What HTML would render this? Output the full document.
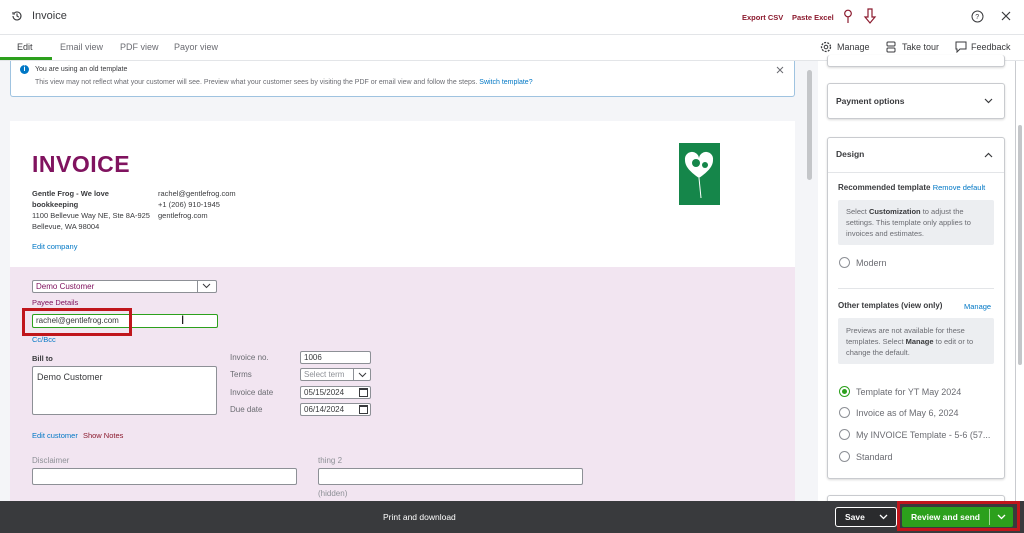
<!DOCTYPE html>
<html><head><style>
*{box-sizing:border-box;margin:0;padding:0}
body{width:1024px;height:533px;overflow:hidden;font-family:"Liberation Sans",sans-serif;background:#fff;position:relative;color:#393a3d;font-size:9px}
.a{position:absolute}
.inp{position:absolute;background:#fff;border:1px solid #8d9096;border-radius:2px;font-size:8px;padding:1px 3px;color:#393a3d}
.lbl{position:absolute;font-size:8px;color:#6b6c72}
.card{position:absolute;left:827px;width:178px;border:1px solid #c9cbcf;border-radius:3px;background:#fff;box-shadow:0 1px 2px rgba(0,0,0,.15)}
.radio{position:absolute;width:11px;height:11px;border:1px solid #8d9096;border-radius:50%;background:#fff}
.rt{position:absolute;font-size:9px;color:#6b6c72}
</style></head><body>
<div class="a" style="left:0;top:0;width:1024px;height:35px;border-bottom:1px solid #e3e5e8"></div>
<svg class="a" style="left:11px;top:10px" width="12" height="12" viewBox="0 0 12 12"><path d="M2 6a4 4 0 1 0 1.2-2.9M2 2v2h2M6 3.5V6l1.8 1.2" fill="none" stroke="#393a3d" stroke-width="1.1"/></svg>
<div class="a" style="left:32px;top:10px;font-size:11px">Invoice</div>
<div class="a" style="left:742px;top:13px;font-size:7.5px;color:#8b1a2e;font-weight:bold">Export CSV</div>
<div class="a" style="left:792px;top:13px;font-size:7.5px;color:#8b1a2e;font-weight:bold">Paste Excel</div>
<svg class="a" style="left:842px;top:9px" width="12" height="15" viewBox="0 0 12 15"><circle cx="6" cy="4.5" r="3.3" fill="none" stroke="#8b1a2e" stroke-width="1.2"/><path d="M6 8v6" stroke="#8b1a2e" stroke-width="1.2"/></svg>
<svg class="a" style="left:863px;top:8px" width="14" height="16" viewBox="0 0 14 16"><path d="M5 1h4v8h3l-5 6-5-6h3z" fill="none" stroke="#8b1a2e" stroke-width="1.2"/></svg>
<svg class="a" style="left:971px;top:10px" width="13" height="13" viewBox="0 0 13 13"><circle cx="6.5" cy="6.5" r="5.5" fill="none" stroke="#393a3d"/><text x="4.3" y="9" font-size="7" fill="#393a3d" font-family="Liberation Sans">?</text></svg>
<svg class="a" style="left:1001px;top:11px" width="10" height="10" viewBox="0 0 10 10"><path d="M1 1l8 8M9 1l-8 8" stroke="#393a3d" stroke-width="1.2"/></svg>
<div class="a" style="left:0;top:36px;width:1024px;height:25px;border-bottom:1px solid #e3e5e8"></div>
<div class="a" style="left:17px;top:42px;font-size:9px">Edit</div>
<div class="a" style="left:0;top:57px;width:52px;height:3px;background:#2ca01c"></div>
<div class="a" style="left:60px;top:42px;font-size:9px;color:#6b6c72">Email view</div>
<div class="a" style="left:120px;top:42px;font-size:9px;color:#6b6c72">PDF view</div>
<div class="a" style="left:174px;top:42px;font-size:9px;color:#6b6c72">Payor view</div>
<svg class="a" style="left:820px;top:41px" width="12" height="12" viewBox="0 0 12 12"><circle cx="6" cy="6" r="4.5" fill="none" stroke="#393a3d" stroke-width="1.3" stroke-dasharray="2 1.2"/><circle cx="6" cy="6" r="1.8" fill="none" stroke="#393a3d"/></svg>
<div class="a" style="left:837px;top:42px;font-size:9px">Manage</div>
<svg class="a" style="left:886px;top:41px" width="10" height="12" viewBox="0 0 10 12"><rect x="1" y="1" width="8" height="4" rx="1" fill="none" stroke="#393a3d"/><rect x="1" y="7" width="8" height="4" rx="1" fill="none" stroke="#393a3d"/></svg>
<div class="a" style="left:902px;top:42px;font-size:9px">Take tour</div>
<svg class="a" style="left:955px;top:41px" width="12" height="12" viewBox="0 0 12 12"><path d="M1 1h10v7H5l-3 3V8H1z" fill="none" stroke="#393a3d"/></svg>
<div class="a" style="left:971px;top:42px;font-size:9px">Feedback</div>
<div class="a" style="left:0;top:61px;width:818px;height:440px;background:#f4f5f8"></div>
<div class="a" style="left:807px;top:70px;width:5px;height:110px;background:#c4c6c9;border-radius:3px"></div>
<div class="a" style="left:10px;top:61px;width:785px;height:36px;background:#fff;border:1px solid #9fc3e0;border-top:none;border-radius:0 0 3px 3px"></div>
<div class="a" style="left:20px;top:65px;width:9px;height:9px;border-radius:50%;background:#0077c5;color:#fff;font-size:7px;text-align:center;line-height:9px;font-weight:bold">i</div>
<div class="a" style="left:35px;top:66px;font-size:7px;color:#393a3d">You are using an old template</div>
<div class="a" style="left:35px;top:79px;font-size:7px;color:#6b6c72">This view may not reflect what your customer will see. Preview what your customer sees by visiting the PDF or email view and follow the steps. <span style="color:#0077c5">Switch template?</span></div>
<svg class="a" style="left:776px;top:66px" width="8" height="8" viewBox="0 0 8 8"><path d="M1 1l6 6M7 1l-6 6" stroke="#6b6c72"/></svg>
<div class="a" style="left:10px;top:121px;width:785px;height:146px;background:#fff"></div>
<div class="a" style="left:10px;top:267px;width:785px;height:234px;background:#f2e5f1"></div>
<div class="a" style="left:32px;top:151px;font-size:23px;color:#80135f;font-weight:bold;letter-spacing:.5px">INVOICE</div>
<div class="a" style="left:32px;top:188px;font-size:7.5px;line-height:11px;color:#393a3d"><b>Gentle Frog - We love<br>bookkeeping</b><br>1100 Bellevue Way NE, Ste 8A-925<br>Bellevue, WA 98004</div>
<div class="a" style="left:158px;top:188px;font-size:7.5px;line-height:11px">rachel@gentlefrog.com<br>+1 (206) 910-1945<br>gentlefrog.com</div>
<div class="a" style="left:32px;top:242px;font-size:7.5px;color:#0077c5">Edit company</div>
<div class="a" style="left:679px;top:143px;width:41px;height:62px;background:#15864a"></div>
<svg class="a" style="left:679px;top:143px" width="41" height="62" viewBox="0 0 41 62"><path d="M20 35c-10-7-14-12-14-18a7 7 0 0 1 14-2a7 7 0 0 1 14 2c0 6-4 11-14 18z" fill="#fff"/><path d="M20 35l2 20" stroke="#fff" stroke-width="1"/><circle cx="17" cy="20" r="4" fill="#15864a"/><circle cx="26" cy="22" r="3" fill="#15864a"/></svg>
<div class="inp" style="left:32px;top:280px;width:185px;height:13px;color:#80135f">Demo Customer</div>
<div class="a" style="left:197px;top:280px;width:1px;height:13px;background:#8d9096"></div>
<svg class="a" style="left:202px;top:283px" width="9" height="6" viewBox="0 0 9 6"><path d="M1 1l3.5 3.5L8 1" fill="none" stroke="#393a3d"/></svg>
<div class="a" style="left:32px;top:298px;font-size:7.5px;color:#80135f">Payee Details</div>
<div class="inp" style="left:32px;top:314px;width:186px;height:14px;border-color:#2ca01c">rachel@gentlefrog.com</div>
<div class="a" style="left:22px;top:308px;width:110px;height:28px;border:3px solid #c0161c"></div>
<div class="a" style="left:181px;top:313px;font-size:12px;color:#000">I</div>
<div class="a" style="left:32px;top:335px;font-size:7.5px;color:#0077c5">Cc/Bcc</div>
<div class="a" style="left:32px;top:354px;font-size:7.5px;font-weight:bold">Bill to</div>
<div class="inp" style="left:32px;top:366px;width:185px;height:49px;font-size:9px;padding:5px 4px">Demo Customer</div>
<div class="lbl" style="left:230px;top:353px">Invoice no.</div>
<div class="lbl" style="left:230px;top:370px">Terms</div>
<div class="lbl" style="left:230px;top:388px">Invoice date</div>
<div class="lbl" style="left:230px;top:405px">Due date</div>
<div class="inp" style="left:300px;top:351px;width:71px;height:13px">1006</div>
<div class="inp" style="left:300px;top:368px;width:71px;height:13px;color:#8d9096">Select term</div>
<div class="a" style="left:353px;top:368px;width:1px;height:13px;background:#8d9096"></div>
<svg class="a" style="left:358px;top:372px" width="9" height="6" viewBox="0 0 9 6"><path d="M1 1l3.5 3.5L8 1" fill="none" stroke="#393a3d"/></svg>
<div class="inp" style="left:300px;top:386px;width:71px;height:13px">05/15/2024</div>
<div class="inp" style="left:300px;top:403px;width:71px;height:13px">06/14/2024</div>
<div class="a" style="left:359px;top:388px;width:9px;height:9px;border:1px solid #393a3d;border-top-width:2px"></div>
<div class="a" style="left:359px;top:405px;width:9px;height:9px;border:1px solid #393a3d;border-top-width:2px"></div>
<div class="a" style="left:32px;top:431px;font-size:7.5px;color:#0077c5">Edit customer <span style="color:#8b1a2e;margin-left:3px">Show Notes</span></div>
<div class="lbl" style="left:32px;top:456px;color:#8d9096">Disclaimer</div>
<div class="inp" style="left:32px;top:468px;width:265px;height:17px"></div>
<div class="lbl" style="left:318px;top:456px;color:#8d9096">thing 2</div>
<div class="inp" style="left:318px;top:468px;width:265px;height:17px"></div>
<div class="lbl" style="left:318px;top:489px;color:#8d9096">(hidden)</div>
<div class="a" style="left:818px;top:61px;width:198px;height:440px;background:#fff;border-right:1px solid #c9cbcf"></div>
<div class="a" style="left:1018px;top:125px;width:4px;height:240px;background:#c4c6c9;border-radius:2px"></div>
<div class="card" style="top:55px;height:12px;border-top:none"></div>
<div class="card" style="top:83px;height:36px"></div>
<div class="a" style="left:836px;top:96px;font-size:8.5px;font-weight:bold;color:#393a3d">Payment options</div>
<svg class="a" style="left:984px;top:98px" width="9" height="6" viewBox="0 0 9 6"><path d="M1 1l3.5 3.5L8 1" fill="none" stroke="#393a3d" stroke-width="1.2"/></svg>
<div class="card" style="top:137px;height:342px"></div>
<div class="a" style="left:828px;top:172px;width:176px;height:1px;background:#e3e5e8"></div>
<div class="a" style="left:836px;top:149px;font-size:8.5px;font-weight:bold">Design</div>
<svg class="a" style="left:984px;top:152px" width="9" height="6" viewBox="0 0 9 6"><path d="M1 5l3.5-3.5L8 5" fill="none" stroke="#393a3d" stroke-width="1.2"/></svg>
<div class="a" style="left:838px;top:183px;font-size:8px;font-weight:bold">Recommended template <span style="color:#0077c5;font-weight:normal;font-size:7.5px">Remove default</span></div>
<div class="a" style="left:838px;top:200px;width:156px;height:45px;background:#eceef1;border-radius:2px;padding:6px 8px;font-size:7.5px;line-height:11px;color:#6b6c72">Select <b style="color:#393a3d">Customization</b> to adjust the settings. This template only applies to invoices and estimates.</div>
<div class="radio" style="left:839px;top:257px"></div><div class="rt" style="left:856px;top:258px">Modern</div>
<div class="a" style="left:838px;top:288px;width:156px;height:1px;background:#e3e5e8"></div>
<div class="a" style="left:838px;top:301px;font-size:8px;font-weight:bold">Other templates (view only)</div>
<div class="a" style="left:964px;top:302px;font-size:7.5px;color:#0077c5">Manage</div>
<div class="a" style="left:838px;top:318px;width:156px;height:46px;background:#eceef1;border-radius:2px;padding:7px 8px;font-size:7.5px;line-height:11px;color:#6b6c72">Previews are not available for these templates. Select <b style="color:#393a3d">Manage</b> to edit or to change the default.</div>
<div class="radio" style="left:839px;top:386px;border-color:#2ca01c"></div><div class="a" style="left:842px;top:389px;width:5px;height:5px;border-radius:50%;background:#2ca01c"></div>
<div class="rt" style="left:856px;top:387px">Template for YT May 2024</div>
<div class="radio" style="left:839px;top:407px"></div><div class="rt" style="left:856px;top:408px">Invoice as of May 6, 2024</div>
<div class="radio" style="left:839px;top:429px"></div><div class="rt" style="left:856px;top:430px">My INVOICE Template - 5-6 (57...</div>
<div class="radio" style="left:839px;top:451px"></div><div class="rt" style="left:856px;top:452px">Standard</div>
<div class="card" style="top:495px;height:20px"></div>
<div class="a" style="left:0;top:501px;width:1024px;height:32px;background:#393a3d"></div>
<div class="a" style="left:383px;top:512px;font-size:8.5px;color:#fff">Print and download</div>
<div class="a" style="left:835px;top:507px;width:62px;height:20px;border:1px solid #fff;border-radius:3px;background:#2a2b2d"></div>
<div class="a" style="left:845px;top:512px;font-size:8.5px;color:#fff;font-weight:bold">Save</div>
<svg class="a" style="left:879px;top:514px" width="9" height="6" viewBox="0 0 9 6"><path d="M1 1l3.5 3.5L8 1" fill="none" stroke="#fff" stroke-width="1.3"/></svg>
<div class="a" style="left:897px;top:501px;width:123px;height:30px;border:3px solid #c0161c"></div>
<div class="a" style="left:902px;top:507px;width:111px;height:20px;background:#2ca01c;border-radius:2px"></div>
<div class="a" style="left:911px;top:512px;font-size:8.5px;color:#fff;font-weight:bold">Review and send</div>
<div class="a" style="left:989px;top:509px;width:1px;height:16px;background:#9fd895"></div>
<svg class="a" style="left:997px;top:514px" width="9" height="6" viewBox="0 0 9 6"><path d="M1 1l3.5 3.5L8 1" fill="none" stroke="#fff" stroke-width="1.3"/></svg>
</body></html>
